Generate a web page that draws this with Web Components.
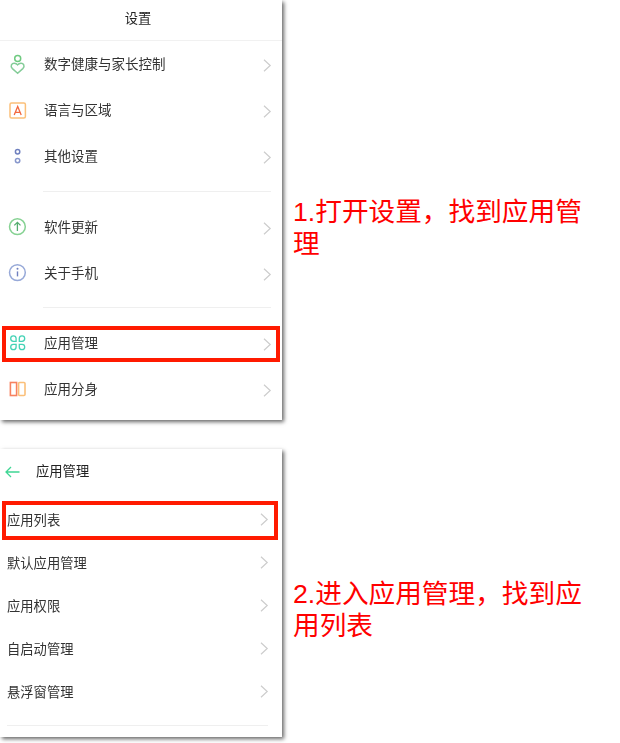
<!DOCTYPE html>
<html lang="zh">
<head>
<meta charset="utf-8">
<title>应用管理</title>
<style>
    html, body { margin: 0; background: #fff; }
    body { width: 620px; height: 743px; overflow: hidden; font-family: "Liberation Sans", "Noto Sans CJK SC", sans-serif; }
    svg { display: block; }
</style>
</head>
<body>
<step-row top="0" caption-top="196">
    <phone-screen height="420">
        <screen-header center>设置</screen-header>
        <setting-row label="数字健康与家长控制" icon="health"></setting-row>
        <setting-row label="语言与区域" icon="lang"></setting-row>
        <setting-row label="其他设置" icon="other"></setting-row>
        <list-divider left="43" right="11" top="12" bottom="12"></list-divider>
        <setting-row label="软件更新" icon="update"></setting-row>
        <setting-row label="关于手机" icon="about"></setting-row>
        <list-divider left="43" right="11" top="11" bottom="12"></list-divider>
        <setting-row label="应用管理" icon="apps" marked></setting-row>
        <setting-row label="应用分身" icon="clone"></setting-row>
    </phone-screen>
    <span slot="caption">1.打开设置，找到应用管理</span>
</step-row>
<step-row top="29" caption-top="129">
    <phone-screen height="288">
        <screen-header back>应用管理</screen-header>
        <setting-row label="应用列表" short marked></setting-row>
        <setting-row label="默认应用管理" short></setting-row>
        <setting-row label="应用权限" short></setting-row>
        <setting-row label="自启动管理" short></setting-row>
        <setting-row label="悬浮窗管理" short></setting-row>
        <list-divider left="7" right="14" top="12" bottom="0"></list-divider>
    </phone-screen>
    <span slot="caption">2.进入应用管理，找到应用列表</span>
</step-row>

<script>
const ICONS = {
    health: `<circle cx="17.7" cy="58.4" r="3" fill="none" stroke="#6fca80" stroke-width="1.5"/><path d="M17.6 73.2l-5.2-4.6c-2.6-2.5-.6-5.6 2-5.4 1.4.1 2.4.7 3.2 1.7.8-1 1.8-1.6 3.2-1.7 2.6-.2 4.6 2.9 2 5.4z" fill="none" stroke="#84cc98" stroke-width="1.5"/>`,
    lang: `<rect x="10" y="103" width="15.4" height="15" rx="1.5" fill="none" stroke="#fbc07a" stroke-width="1.5"/><path d="M14.2 115l3.5-8.6 3.5 8.6M15.3 112.4h4.8" fill="none" stroke="#f2683e" stroke-width="1.3"/>`,
    other: `<circle cx="17.6" cy="151.8" r="2.2" fill="none" stroke="#6f80bf" stroke-width="1.5"/><circle cx="17.6" cy="160.6" r="2.2" fill="none" stroke="#8797cc" stroke-width="1.5"/>`,
    update: `<circle cx="17.4" cy="226.7" r="7.9" fill="none" stroke="#86d293" stroke-width="1.5"/><path d="M17.4 231v-8.4M14.3 225.4l3.1-3 3.1 3" fill="none" stroke="#55ad70" stroke-width="1.3"/>`,
    about: `<circle cx="17.4" cy="272.6" r="7.9" fill="none" stroke="#97a9d8" stroke-width="1.5"/><path d="M17.5 271.4v5" fill="none" stroke="#7080c0" stroke-width="1.4"/><circle cx="17.5" cy="268.8" r="1" fill="#7080c0"/>`,
    apps: `<g fill="none" stroke="#44d2b5" stroke-width="1.3"><path d="M13.4 335.9a2.7 2.7 0 0 1 2.7 2.7v2.7h-2.7a2.7 2.7 0 0 1 0-5.4z"/><path d="M22 335.9a2.7 2.7 0 0 1 0 5.4h-2.7v-2.7a2.7 2.7 0 0 1 2.7-2.7z"/><path d="M13.4 344.3h2.7v2.7a2.7 2.7 0 1 1-2.7-2.7z"/><path d="M19.3 344.3H22a2.7 2.7 0 1 1-2.7 2.7z"/></g>`,
    clone: `<rect x="10.4" y="382.5" width="6.2" height="13" fill="none" stroke="#f7825f" stroke-width="1.6"/><rect x="18.6" y="382.5" width="6.4" height="13" rx="1" fill="none" stroke="#fbc07a" stroke-width="1.6"/>`,
}

class StepRow extends HTMLElement {
    constructor() {
        super()
        this.attachShadow({ mode: 'open' })
    }
    connectedCallback() {
        const top = this.getAttribute('top') || 0
        const captionTop = this.getAttribute('caption-top') || 0
        this.shadowRoot.innerHTML = `
            <style>
                :host { display: flex; margin-top: ${top}px; align-items: flex-start; }
                .caption {
                    width: 292px;
                    margin: ${captionTop}px 0 0 11px;
                    font-size: 26.67px;
                    line-height: 32px;
                    color: #ff0000;
                }
            </style>
            <slot></slot>
            <div class="caption"><slot name="caption"></slot></div>
        `
    }
}

class PhoneScreen extends HTMLElement {
    constructor() {
        super()
        this.attachShadow({ mode: 'open' })
    }
    connectedCallback() {
        this.shadowRoot.innerHTML = `
            <style>
                :host {
                    display: block;
                    box-sizing: border-box;
                    width: 282px;
                    height: ${this.getAttribute('height')}px;
                    background: #fff;
                    box-shadow: 2px 2px 4px rgba(0, 0, 0, .6);
                }
            </style>
            <slot></slot>
        `
    }
}

class ScreenHeader extends HTMLElement {
    constructor() {
        super()
        this.attachShadow({ mode: 'open' })
    }
    connectedCallback() {
        const back = this.hasAttribute('back')
        this.shadowRoot.innerHTML = `
            <style>
                :host {
                    display: flex;
                    align-items: center;
                    box-sizing: border-box;
                    height: ${back ? 44 : 41}px;
                    ${back ? 'margin-bottom: 5px; padding: 0 0 0 5px;' : 'justify-content: center; border-bottom: 1px solid #f1f1f1; padding: 0 6px 5px 0;'}
                    font-size: 13.3px;
                    color: #222;
                    filter: blur(.35px);
                }
                svg { display: block; margin: 2px 16px 0 0; }
                .text { margin-top: ${back ? -1 : 0}px; }
            </style>
            ${back ? `<svg width="15" height="12" viewBox="0 0 15 12"><path d="M14.5 6H1.2M6 1L1 6l5 5" fill="none" stroke="#3fd694" stroke-width="1.3"/></svg>` : ''}
            <span class="text"><slot></slot></span>
        `
    }
}

class SettingRow extends HTMLElement {
    constructor() {
        super()
        this.attachShadow({ mode: 'open' })
    }
    connectedCallback() {
        const short = this.hasAttribute('short')
        const marked = this.hasAttribute('marked')
        const icon = this.getAttribute('icon')
        this.shadowRoot.innerHTML = `
            <style>
                :host {
                    display: flex;
                    position: relative;
                    align-items: center;
                    height: ${short ? 43 : 46}px;
                    box-sizing: border-box;
                    padding: 0 ${short ? 13 : 10}px 0 ${short ? 7 : 0}px;
                    font-size: ${short ? 13.3 : 13.5}px;
                    color: #333;
                }
                .inner { display: flex; align-items: center; flex: 1; filter: blur(.35px); }
                .icon { width: 44px; height: 24px; flex: none; }
                .label { flex: 1; margin-top: ${short ? 0 : -2}px; }
                .chevron { margin-top: ${short ? 0 : 2}px; }
                .mark {
                    position: absolute;
                    left: 2px;
                    right: ${short ? 4 : 2}px;
                    top: ${short ? 3 : 6}px;
                    bottom: ${short ? 1 : 4}px;
                    border: 4px solid #ff1a00;
                    box-sizing: border-box;
                    filter: blur(.4px);
                }
            </style>
            <div class="inner">
                ${icon ? `<svg class="icon" viewBox="0 0 44 24"><g></g></svg>` : ''}
                <span class="label">${this.getAttribute('label')}</span>
                <svg class="chevron" width="9" height="13" viewBox="0 0 9 13"><path d="M1 .8l6.2 5.7L1 12.2" fill="none" stroke="#cdcdcd" stroke-width="1.2"/></svg>
            </div>
            ${marked ? '<div class="mark"></div>' : ''}
        `
        if (icon) {
            // the icon paths are written in page coordinates of the first screen
            const g = this.shadowRoot.querySelector('g')
            const rowTop = { health: 41, lang: 87, other: 133, update: 204, about: 250, apps: 320, clone: 366 }[icon]
            g.setAttribute('transform', `translate(0 ${-rowTop - 11})`)
            g.innerHTML = ICONS[icon]
        }
    }
}

class ListDivider extends HTMLElement {
    constructor() {
        super()
        this.attachShadow({ mode: 'open' })
    }
    connectedCallback() {
        const a = (name) => this.getAttribute(name)
        this.shadowRoot.innerHTML = `
            <style>
                :host {
                    display: block;
                    height: 1px;
                    background: #efefef;
                    margin: ${a('top')}px ${a('right')}px ${a('bottom')}px ${a('left')}px;
                }
            </style>
        `
    }
}

customElements.define('step-row', StepRow)
customElements.define('phone-screen', PhoneScreen)
customElements.define('screen-header', ScreenHeader)
customElements.define('setting-row', SettingRow)
customElements.define('list-divider', ListDivider)
</script>
</body>
</html>
